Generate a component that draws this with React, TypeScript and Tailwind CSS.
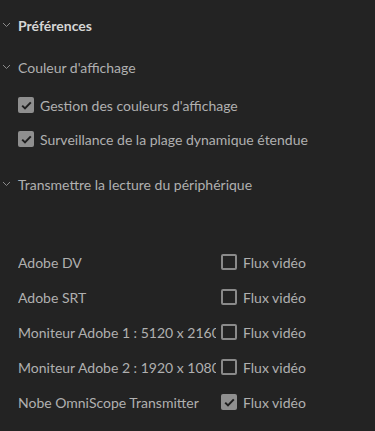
import { useState } from "react";

const Chevron = () => (
  <svg width="9" height="6" viewBox="0 0 9 6" className="shrink-0">
    <path d="M1 1 L4.5 4.5 L8 1" fill="none" stroke="#8a8a8a" strokeWidth="1" />
  </svg>
);

const Box = ({ checked, onClick }: { checked: boolean; onClick: () => void }) =>
  checked ? (
    <button
      onClick={onClick}
      className="w-4 h-4 shrink-0 rounded-[2px] bg-[#8f8f8f] flex items-center justify-center"
    >
      <svg width="11" height="9" viewBox="0 0 11 9">
        <path d="M1.2 4.6 L4 7.4 L9.8 1.4" fill="none" stroke="#1e1e1e" strokeWidth="2" />
      </svg>
    </button>
  ) : (
    <button onClick={onClick} className="w-4 h-4 shrink-0 rounded-[2px] border-2 border-[#8a8a8a]" />
  );

const Header = ({ label, bold }: { label: string; bold?: boolean }) => (
  <div className="flex items-center h-[42px]">
    <div className="w-[18px] pl-[2px] flex items-center">
      <Chevron />
    </div>
    <span className={bold ? "font-bold text-[#d6d6d6]" : "text-[#b0b0b0]"}>{label}</span>
  </div>
);

const App = () => {
  const [opts, setOpts] = useState([true, true]);
  const [devices, setDevices] = useState([
    { name: "Adobe DV", on: false },
    { name: "Adobe SRT", on: false },
    { name: "Moniteur Adobe 1 : 5120 x 2160", on: false },
    { name: "Moniteur Adobe 2 : 1920 x 1080", on: false },
    { name: "Nobe OmniScope Transmitter", on: true },
  ]);

  const toggleOpt = (i: number) => setOpts(opts.map((v, j) => (j === i ? !v : v)));
  const toggleDev = (i: number) =>
    setDevices(devices.map((d, j) => (j === i ? { ...d, on: !d.on } : d)));

  return (
    <div
      className="w-[375px] h-[431px] bg-[#232323] text-[14px] text-[#b0b0b0] overflow-hidden pt-[4px]"
      style={{ fontFamily: 'Lato, "Noto Sans", sans-serif' }}
    >
      <Header label="Préférences" bold />
      <Header label="Couleur d'affichage" />
      <div className="flex flex-col gap-[18px] pl-[18px] pt-[9px]">
        {["Gestion des couleurs d'affichage", "Surveillance de la plage dynamique étendue"].map(
          (label, i) => (
            <div key={label} className="flex items-center gap-[6px] h-[16px]">
              <Box checked={opts[i]} onClick={() => toggleOpt(i)} />
              <span>{label}</span>
            </div>
          )
        )}
      </div>
      <div className="pt-[16px]">
        <Header label="Transmettre la lecture du périphérique" />
      </div>
      <div className="flex flex-col gap-[19px] pl-[18px] pt-[49px]">
        {devices.map((d, i) => (
          <div key={d.name} className="flex items-center h-[16px]">
            <span className="w-[198px] mr-[5px] shrink-0 whitespace-nowrap overflow-hidden">
              {d.name}
            </span>
            <Box checked={d.on} onClick={() => toggleDev(i)} />
            <span className="ml-[6px]">Flux vidéo</span>
          </div>
        ))}
      </div>
    </div>
  );
};

export default App;
